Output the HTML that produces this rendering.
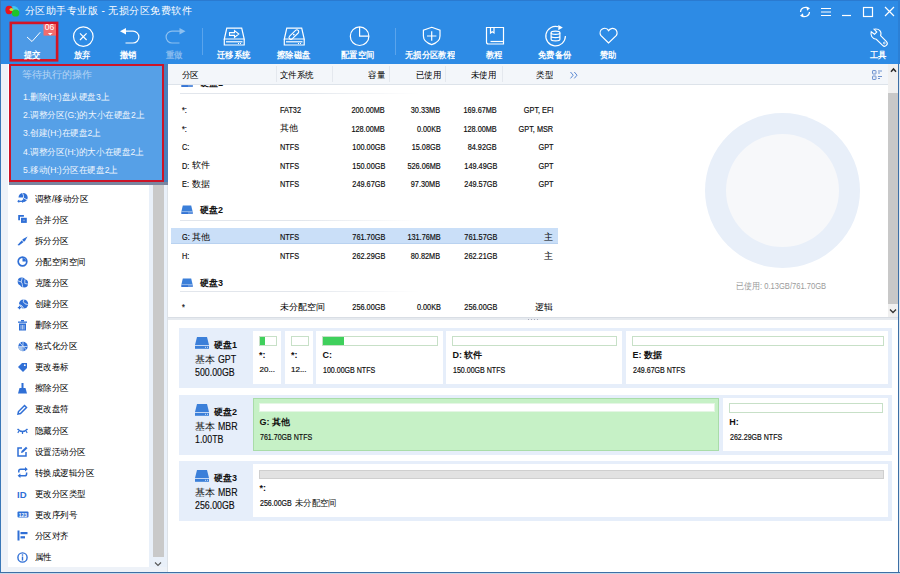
<!DOCTYPE html>
<html><head><meta charset="utf-8">
<style>
*{margin:0;padding:0;box-sizing:border-box}
html,body{width:900px;height:574px;overflow:hidden;background:#fff;font-family:"Liberation Sans",sans-serif}
.a{position:absolute}
.t{position:absolute;white-space:nowrap;line-height:12px;height:12px}
#top{left:0;top:0;width:900px;height:64px;background:#2d8be5;border-top:1px solid #2a7ad0}
#lb{left:0;top:0;width:1px;height:574px;background:#3a78b8}
#rb{left:898px;top:0;width:2px;height:574px;background:linear-gradient(180deg,#2b80d6 0,#2b80d6 64px,#dfe8f2 64px)}
#rb2{left:898px;top:64px;width:1px;height:510px;background:#3d6fa5}
#bb{left:0;top:572px;width:900px;height:2px;background:#c9d8e8;border-top:1px solid #3d6fa5}
.wt{color:#fff}
.tb{color:#fff;font-size:8.7px;font-weight:bold;margin-top:0.8px;transform:scaleX(.925);transform-origin:0 50%}
/* sidebar */
#sbg{left:1px;top:64px;width:167px;height:508px;background:#eef2f8}
#spanel{left:8px;top:64px;width:142px;height:503px;background:#fff}
#sscr{left:149px;top:64px;width:18px;height:503px;background:#e9f0f9}
#sthumb{left:153px;top:72px;width:11px;height:485px;background:#c9c9c9}
#sline{left:167px;top:64px;width:1px;height:508px;background:#dde2e8}
.si{color:#000;font-weight:500;font-size:9px;transform:scaleX(.94);transform-origin:0 50%}
/* popup */
#pop{left:9px;top:64px;width:155px;height:118px;background:#56a0e7;border:2.6px solid #cc1428}
#popsh{left:9px;top:64px;width:159px;height:121px;background:linear-gradient(180deg,#4a80bb 0,#4a80bb 118px,#7a85a0 118px)}
.pt{color:#f0f6fd;font-size:9px;transform:scaleX(.955);transform-origin:0 50%}
/* right upper */
#hdr{z-index:2;left:168px;top:64px;width:720px;height:21px;background:#f3f6fa;border-bottom:1px solid #dde3ea}
.hs{z-index:3;position:absolute;top:66px;width:1px;height:16px;background:#e4e8ee}
.th{z-index:3;color:#000;font-weight:500;font-size:9px;transform:scaleX(.94);transform-origin:0 50%}
.tc{color:#000;font-weight:500;font-size:9px;margin-top:0.5px}
.td{color:#000;-webkit-text-stroke:0.2px #333;font-size:8.5px;margin-top:1px;transform:scaleX(.86);transform-origin:0 50%}
#uscr{left:888px;top:64px;width:10px;height:253px;background:#f0f0f0}
#uthumb{left:888px;top:93px;width:10px;height:211px;background:#c8c8c8}
.sep{position:absolute;left:180px;width:240px;height:1px;background:linear-gradient(90deg,#e2e6ec,#e2e6ec 50%,rgba(226,230,236,0))}
#sel{left:171px;top:228px;width:387px;height:16px;background:#cadff8;border-bottom:1px solid #b9d2f0}
#donut{left:705px;top:113px;width:155px;height:155px;border-radius:50%;background:#e8eff9}
#donin{left:726px;top:134px;width:113px;height:113px;border-radius:50%;background:#f7f8fa}
#split{left:168px;top:317px;width:730px;height:3px;background:#e6eaef;border-top:1px solid #d9dee5}
/* cards */
.card{position:absolute;left:179px;width:713px;height:60px;background:#e6eefa}
.pbox{position:absolute;background:#fff}
.bar{position:absolute;height:10px;border:1px solid #c7e0c7;background:#fff}
.fill{position:absolute;left:0;top:0;height:8px;background:#3fd05c}
.ct{color:#000;-webkit-text-stroke:0.2px #333;font-size:8.5px;transform:scaleX(.83);transform-origin:0 50%}
.ci{color:#000;-webkit-text-stroke:0.15px #333;font-size:10px;transform:scaleX(.88);transform-origin:0 50%}
.r{transform-origin:100% 50%!important}
.cb{color:#111;font-size:9px;font-weight:bold}
</style></head><body>
<div id="top" class="a"></div>
<div id="sbg" class="a"></div>
<div id="spanel" class="a"></div>
<div id="sscr" class="a"></div>
<div id="sthumb" class="a"></div>
<div id="sline" class="a"></div>

<div id="hdr" class="a"></div>
<div id="uscr" class="a"></div>
<div id="uthumb" class="a"></div>
<div id="sel" class="a"></div>
<div id="donut" class="a"></div>
<div id="donin" class="a"></div>
<div id="split" class="a"></div>

<svg class="a" style="left:0;top:0" width="900" height="64" viewBox="0 0 900 64">
 <!-- logo -->
 <g>
  <ellipse cx="9" cy="10" rx="3.6" ry="4.2" fill="#e8141c"/>
  <path d="M12 6.2 A6 5.5 0 0 1 19.2 11 L14 11 Z" fill="#3fc8f0"/>
  <ellipse cx="15.6" cy="13" rx="3.8" ry="3.6" fill="#1ec42a"/>
  <ellipse cx="11.5" cy="9.5" rx="2" ry="1.6" fill="#b8e040"/>
 </g>
 <!-- window controls -->
 <g fill="none" stroke="#fff" stroke-width="1.2">
  <path d="M800.5 12 A4.8 4.8 0 0 1 808.5 8.6"/>
  <path d="M809.5 12 A4.8 4.8 0 0 1 801.5 15.4"/>
  <path d="M821 8.5 H831 M821 12 H831 M821 15.5 H831" stroke-width="1"/>
  <path d="M842 15.5 H851"/>
  <rect x="863.5" y="7.5" width="9" height="9"/>
  <path d="M885 7 L894 16 M894 7 L885 16"/>
 </g>
 <path d="M806.5 6.5 L810 8.2 L807 10.8 Z M803.5 17.5 L800 15.8 L803 13.2 Z" fill="#fff"/>
 <!-- 提交 box -->
 <rect x="10.8" y="22.9" width="46.3" height="37.4" fill="#4d9ae6" stroke="#d41424" stroke-width="2.6"/>
 <rect x="43.5" y="24" width="12.5" height="11.6" fill="#f26c6c"/>
 <text x="49.6" y="30.4" font-size="8.6" fill="#fff" text-anchor="middle" font-family="Liberation Sans" textLength="9.5" lengthAdjust="spacingAndGlyphs">06</text>
 <path d="M47.8 33 H52.6 L50.2 35.2 Z" fill="#fff"/>
 <g fill="none" stroke="#fff" stroke-width="1.2">
  <path d="M27 37 L32 41.5 L40.3 32.2" stroke-width="1"/>
  <!-- 放弃 -->
  <circle cx="83.3" cy="36.6" r="9.8"/>
  <path d="M80 33.4 L86.6 40 M86.6 33.4 L80 40"/>
  <!-- 撤销 -->
  <path d="M124 31.2 H133 A5.9 5.9 0 0 1 133 43 H125.5"/>
  <!-- 配置空间 -->
  <circle cx="359.6" cy="36.2" r="9.3"/>
  <path d="M359.6 26.9 V36.2 H368.9"/>
  <!-- shield -->
  <path d="M431.7 27.3 L440 30.2 V36 C440 40.5 436 43.2 431.7 44.6 C427.4 43.2 423.4 40.5 423.4 36 V30.2 Z"/>
  <path d="M431.7 31.3 V40.7 M427 36 H436.4"/>
  <!-- book -->
  <path d="M486.5 27.5 H503.5 V44 H488.5 A2 2 0 0 1 486.5 42 Z"/>
  <path d="M490.5 41.5 H503.5"/>
  <path d="M490.5 27.5 V33 L492.2 31.8 L494 33 V27.5"/>
  <!-- backup -->
  <path d="M565.4 36.1 A9.8 9.8 0 1 1 558.6 26.8"/>
  <ellipse cx="555.5" cy="32.8" rx="4.4" ry="1.6"/>
  <path d="M551.1 32.8 V39.3 A4.4 1.6 0 0 0 559.9 39.3 V32.8 M551.1 36.1 A4.4 1.6 0 0 0 559.9 36.1"/>
  <!-- heart -->
  <path d="M608.6 43 L600.8 35.4 A4.3 4.3 0 0 1 608.6 30.6 A4.3 4.3 0 0 1 616.4 35.4 Z"/>
  <!-- wrench -->
  <path d="M874 29.2 L876.8 32 L874.5 34.3 L871.2 31.8 C870.3 35 871.8 38.7 876.3 39.3 L882.6 45.3 A2 2 0 0 0 886.5 41.7 L880.6 35.6 C882 31.5 879.5 28.3 874 29.2 Z" stroke-width="1.1"/><circle cx="884.3" cy="43" r="0.9" stroke-width="0.8"/>
 </g>
 <path d="M120 31.2 L126 28 V34.4 Z" fill="#fff"/>
 <g fill="none" stroke="#8cc0f0" stroke-width="1.2">
  <path d="M181 31.2 H172 A5.9 5.9 0 0 0 172 43 H179.5"/>
 </g>
 <path d="M185.5 31.2 L179.5 28 V34.4 Z" fill="#8cc0f0"/>
 <path d="M558.3 25 L562.8 27.6 L558.3 30.3 Z" fill="#fff"/>
 <!-- separators -->
 <rect x="202" y="28" width="1" height="27" fill="#5aa4ec"/>
 <rect x="395" y="28" width="1" height="27" fill="#5aa4ec"/>
 <!-- drives -->
 <g fill="none" stroke="#fff" stroke-width="1.2">
  <path d="M226.8 28.2 H241.7 L244.2 39 H224.3 Z"/>
  <path d="M224.3 39 V45 H244.2 V39"/>
  <path d="M226 41.8 H242.5"/>
  <path d="M229.5 32.6 H234.5 V30.6 L238.8 34 L234.5 37.4 V35.4 H229.5 Z" stroke-width="1.1"/>
  <path d="M286.8 28.2 H301.7 L304.2 39 H284.3 Z"/>
  <path d="M284.3 39 V45 H304.2 V39"/>
  <path d="M286 41.8 H302.5"/>
  <path d="M289.6 36.2 L295.6 30.4 A1.8 1.8 0 0 1 298.2 33 L292.2 38.8 A1.8 1.8 0 0 1 289.6 36.2 Z" stroke-width="1.1"/><circle cx="293.8" cy="34.6" r="0.9" fill="#fff" stroke="none"/>
 </g>
 
 <path d="M238 43.5 h1 M240 43.5 h1 M298 43.5 h1 M300 43.5 h1" stroke="#fff" stroke-width="1"/>
</svg>
<!-- title -->
<div class="t wt" style="left:25px;top:4.5px;font-size:10px;letter-spacing:0.45px;line-height:12px">分区助手专业版 - 无损分区免费软件</div>
<!-- toolbar labels -->
<div class="t tb" style="left:24px;top:48.3px">提交</div>
<div class="t tb" style="left:74px;top:48.3px">放弃</div>
<div class="t tb" style="left:120px;top:48.3px">撤销</div>
<div class="t tb" style="left:166px;top:48.3px;color:#86baee">重做</div>
<div class="t tb" style="left:217px;top:48.3px">迁移系统</div>
<div class="t tb" style="left:277px;top:48.3px">擦除磁盘</div>
<div class="t tb" style="left:341px;top:48.3px">配置空间</div>
<div class="t tb" style="left:405px;top:48.3px">无损分区教程</div>
<div class="t tb" style="left:486px;top:48.3px">教程</div>
<div class="t tb" style="left:538px;top:48.3px">免费备份</div>
<div class="t tb" style="left:600px;top:48.3px">赞助</div>
<div class="t tb" style="left:870px;top:48.3px">工具</div>
<!-- sidebar -->
<div class="t si" style="left:35px;top:192.6px">调整/移动分区</div>
<div class="t si" style="left:35px;top:213.7px">合并分区</div>
<div class="t si" style="left:35px;top:234.8px">拆分分区</div>
<div class="t si" style="left:35px;top:255.8px">分配空闲空间</div>
<div class="t si" style="left:35px;top:276.9px">克隆分区</div>
<div class="t si" style="left:35px;top:298.0px">创建分区</div>
<div class="t si" style="left:35px;top:319.1px">删除分区</div>
<div class="t si" style="left:35px;top:340.2px">格式化分区</div>
<div class="t si" style="left:35px;top:361.2px">更改卷标</div>
<div class="t si" style="left:35px;top:382.3px">擦除分区</div>
<div class="t si" style="left:35px;top:403.4px">更改盘符</div>
<div class="t si" style="left:35px;top:424.5px">隐藏分区</div>
<div class="t si" style="left:35px;top:445.6px">设置活动分区</div>
<div class="t si" style="left:35px;top:466.6px">转换成逻辑分区</div>
<div class="t si" style="left:35px;top:487.7px">更改分区类型</div>
<div class="t si" style="left:35px;top:508.8px">更改序列号</div>
<div class="t si" style="left:35px;top:529.9px">分区对齐</div>
<div class="t si" style="left:35px;top:551.0px">属性</div>
<svg class="a" style="left:17px;top:193.1px" width="12" height="11" viewBox="0 0 12 11"><path d="M1.5 4.6 A4.6 4.6 0 1 1 6.1 9.2 V4.6 Z" fill="#2f6fd6"/><path d="M5.6 0.2 Q7 3 6.4 5 L10.4 7" stroke="#fff" stroke-width="0.8" fill="none"/><path d="M1.6 8.3 H5.6" stroke="#2f6fd6" stroke-width="1.3"/><path d="M0.2 8.3 L2.2 6.6 V10 Z M7 8.3 L5 6.6 V10 Z" fill="#2f6fd6"/></svg>
<svg class="a" style="left:17px;top:214.2px" width="12" height="11" viewBox="0 0 12 11"><path d="M1.2 6.3 V1 H6.9 V2.8 H3 V6.3 Z" fill="#2f6fd6"/><rect x="4.9" y="4.7" width="4" height="3.3" fill="#6f98e0" stroke="#2f6fd6" stroke-width="1.8"/></svg>
<svg class="a" style="left:17px;top:235.3px" width="12" height="11" viewBox="0 0 12 11"><path d="M0.5 10 L6 4 L10.5 1.5 L8 6 L2 10.5 Z" fill="#2f6fd6"/><path d="M3 3 L8 8.5" stroke="#fff" stroke-width="0.9"/></svg>
<svg class="a" style="left:17px;top:256.3px" width="12" height="11" viewBox="0 0 12 11"><circle cx="5.5" cy="5.5" r="4.3" fill="none" stroke="#2f6fd6" stroke-width="1.7"/><path d="M5.5 5.5 V2 A3.5 3.5 0 0 1 9 5.5 Z" fill="#2f6fd6"/></svg>
<svg class="a" style="left:17px;top:277.4px" width="12" height="11" viewBox="0 0 12 11"><circle cx="4.6" cy="4.4" r="3.9" fill="#2f6fd6"/><circle cx="7" cy="6.4" r="4.1" fill="#2f6fd6"/><path d="M1 3.8 L4.2 5 L5.2 1 M4.2 5 C5.6 6 5.2 9 6 11 M7.8 2.5 V6.5 L11 7" stroke="#fff" stroke-width="0.7" fill="none"/></svg>
<svg class="a" style="left:17px;top:298.5px" width="12" height="11" viewBox="0 0 12 11"><circle cx="6.6" cy="5" r="4.6" fill="#2f6fd6"/><path d="M7 0.3 Q5 3 8 4.8 L10.8 5.5 M2 5.6 Q5 5.6 6.8 9.6" stroke="#fff" stroke-width="0.8" fill="none"/><path d="M0.3 8.6 H4.7 M2.5 6.4 V10.8" stroke="#fff" stroke-width="2.2"/><path d="M0.8 8.6 H4.2 M2.5 6.9 V10.3" stroke="#2f6fd6" stroke-width="1.2"/></svg>
<svg class="a" style="left:17px;top:319.6px" width="12" height="11" viewBox="0 0 12 11"><rect x="1" y="1.5" width="9" height="1.3" fill="#2f6fd6"/><rect x="4" y="0" width="3" height="1.5" fill="#2f6fd6"/><rect x="2" y="3.5" width="7" height="7" fill="#2f6fd6"/><path d="M4 5 V9.5 M5.5 5 V9.5 M7 5 V9.5" stroke="#fff" stroke-width="0.6"/></svg>
<svg class="a" style="left:17px;top:340.7px" width="12" height="11" viewBox="0 0 12 11"><circle cx="6" cy="5.5" r="4.7" fill="#2f6fd6"/><path d="M1.3 5.5 L10.7 5.5 M6 0.8 V10.2 M3 2 L9.5 9" stroke="#d9e6f8" stroke-width="0.8" fill="none"/><path d="M1.5 6 A4.7 4.7 0 0 0 5.5 10.2 V6 Z" fill="#a9c4ea"/></svg>
<svg class="a" style="left:17px;top:361.7px" width="12" height="11" viewBox="0 0 12 11"><path d="M1 5 L5 1 H10 V6 L6 10 Z" fill="#2f6fd6"/><circle cx="7.8" cy="3.2" r="0.9" fill="#fff"/></svg>
<svg class="a" style="left:17px;top:382.8px" width="12" height="11" viewBox="0 0 12 11"><rect x="4.5" y="0" width="2" height="5" fill="#2f6fd6"/><path d="M2.5 5 H8.5 L10 10.5 H1 Z" fill="#2f6fd6"/></svg>
<svg class="a" style="left:17px;top:403.9px" width="12" height="11" viewBox="0 0 12 11"><path d="M1 10 L1.5 7.5 L7.5 1.5 L9.5 3.5 L3.5 9.5 Z" fill="none" stroke="#2f6fd6" stroke-width="1.5"/></svg>
<svg class="a" style="left:17px;top:425.0px" width="12" height="11" viewBox="0 0 12 11"><path d="M0.5 4 Q5.5 9 10.5 4" fill="none" stroke="#2f6fd6" stroke-width="1.5"/><path d="M2 6 L0.8 7.8 M5.5 7 V9 M9 6 L10.2 7.8" stroke="#2f6fd6" stroke-width="1.2"/></svg>
<svg class="a" style="left:17px;top:446.1px" width="12" height="11" viewBox="0 0 12 11"><path d="M9 6 V10 H1 V2 H5" fill="none" stroke="#2f6fd6" stroke-width="1.5"/><path d="M4 7 L4.5 5 L9 0.8 L10.5 2.3 L6 6.5 Z" fill="#2f6fd6"/></svg>
<svg class="a" style="left:17px;top:467.1px" width="12" height="11" viewBox="0 0 12 11"><path d="M1.8 5.6 V4 Q1.8 2.2 3.6 2.2 H8.6 M9.6 5.4 V7 Q9.6 8.8 7.8 8.8 H2.8" fill="none" stroke="#2f6fd6" stroke-width="1.5"/><path d="M8 0 L10.8 2.2 L8 4.4 Z M3.4 6.6 L0.6 8.8 L3.4 11 Z" fill="#2f6fd6"/></svg>
<svg class="a" style="left:17px;top:488.2px" width="12" height="11" viewBox="0 0 12 11"><text x="0" y="9.5" font-size="9.5" font-weight="bold" fill="#2f6fd6" font-family="Liberation Sans">ID</text></svg>
<svg class="a" style="left:17px;top:509.3px" width="12" height="11" viewBox="0 0 12 11"><rect x="0.5" y="2.5" width="11" height="6" rx="1" fill="#2f6fd6"/><text x="1.7" y="7.6" font-size="5" font-weight="bold" fill="#fff" font-family="Liberation Sans">123</text></svg>
<svg class="a" style="left:17px;top:530.4px" width="12" height="11" viewBox="0 0 12 11"><rect x="0.5" y="0.5" width="2" height="10" fill="#2f6fd6"/><rect x="3.5" y="2" width="7" height="2.2" fill="#2f6fd6"/><rect x="3.5" y="6.2" width="4.5" height="2.2" fill="#2f6fd6"/></svg>
<svg class="a" style="left:17px;top:551.5px" width="12" height="11" viewBox="0 0 12 11"><circle cx="5.5" cy="5.5" r="4.6" fill="none" stroke="#2f6fd6" stroke-width="1.4"/><rect x="4.8" y="4.5" width="1.4" height="4" fill="#2f6fd6"/><rect x="4.8" y="2.3" width="1.4" height="1.4" fill="#2f6fd6"/></svg>
<!-- header -->
<div class="t th" style="left:182px;top:69px">分区</div>
<div class="t th" style="left:280px;top:69px">文件系统</div>
<div class="t th r" style="right:515px;top:69px">容量</div>
<div class="t th r" style="right:459.5px;top:69px">已使用</div>
<div class="t th r" style="right:404px;top:69px">未使用</div>
<div class="t th r" style="right:347.5px;top:69px">类型</div>
<div class="hs" style="left:276px"></div>
<div class="hs" style="left:332px"></div>
<div class="hs" style="left:389px"></div>
<div class="hs" style="left:445px"></div>
<div class="hs" style="left:502px"></div>

<div class="t td" style="left:182px;top:103px">*:</div>
<div class="t td" style="left:280px;top:103px">FAT32</div>
<div class="t td r" style="right:515px;top:103px">200.00MB</div>
<div class="t td r" style="right:459.5px;top:103px">30.33MB</div>
<div class="t td r" style="right:403px;top:103px">169.67MB</div>
<div class="t td r" style="right:347px;top:103px">GPT, EFI</div>
<div class="t td" style="left:182px;top:121.5px">*:</div>
<div class="t tc" style="left:280px;top:121.5px">其他</div>
<div class="t td r" style="right:515px;top:121.5px">128.00MB</div>
<div class="t td r" style="right:459.5px;top:121.5px">0.00KB</div>
<div class="t td r" style="right:403px;top:121.5px">128.00MB</div>
<div class="t td r" style="right:347px;top:121.5px">GPT, MSR</div>
<div class="t td" style="left:182px;top:140px">C:</div>
<div class="t td" style="left:280px;top:140px">NTFS</div>
<div class="t td r" style="right:515px;top:140px">100.00GB</div>
<div class="t td r" style="right:459.5px;top:140px">15.08GB</div>
<div class="t td r" style="right:403px;top:140px">84.92GB</div>
<div class="t td r" style="right:347px;top:140px">GPT</div>
<div class="t td" style="left:182px;top:158.5px">D:</div>
<div class="t tc" style="left:191.5px;top:158.5px">软件</div>
<div class="t td" style="left:280px;top:158.5px">NTFS</div>
<div class="t td r" style="right:515px;top:158.5px">150.00GB</div>
<div class="t td r" style="right:459.5px;top:158.5px">526.06MB</div>
<div class="t td r" style="right:403px;top:158.5px">149.49GB</div>
<div class="t td r" style="right:347px;top:158.5px">GPT</div>
<div class="t td" style="left:182px;top:177px">E:</div>
<div class="t tc" style="left:191.5px;top:177px">数据</div>
<div class="t td" style="left:280px;top:177px">NTFS</div>
<div class="t td r" style="right:515px;top:177px">249.67GB</div>
<div class="t td r" style="right:459.5px;top:177px">97.30MB</div>
<div class="t td r" style="right:403px;top:177px">249.57GB</div>
<div class="t td r" style="right:347px;top:177px">GPT</div>
<div class="t td" style="left:182px;top:230px">G:</div>
<div class="t tc" style="left:191.5px;top:230px">其他</div>
<div class="t td" style="left:280px;top:230px">NTFS</div>
<div class="t td r" style="right:515px;top:230px">761.70GB</div>
<div class="t td r" style="right:459.5px;top:230px">131.76MB</div>
<div class="t td r" style="right:403px;top:230px">761.57GB</div>
<div class="t tc r" style="right:347px;top:230px">主</div>
<div class="t td" style="left:182px;top:249px">H:</div>
<div class="t td" style="left:280px;top:249px">NTFS</div>
<div class="t td r" style="right:515px;top:249px">262.29GB</div>
<div class="t td r" style="right:459.5px;top:249px">80.82MB</div>
<div class="t td r" style="right:403px;top:249px">262.21GB</div>
<div class="t tc r" style="right:347px;top:249px">主</div>
<div class="t td" style="left:182px;top:300px">*</div>
<div class="t tc" style="left:280px;top:300px">未分配空间</div>
<div class="t td r" style="right:515px;top:300px">256.00GB</div>
<div class="t td r" style="right:459.5px;top:300px">0.00KB</div>
<div class="t td r" style="right:403px;top:300px">256.00GB</div>
<div class="t tc r" style="right:347px;top:300px">逻辑</div>
<div class="sep" style="top:93px"></div>
<div class="sep" style="top:220px"></div>
<div class="sep" style="top:291px"></div>
<div class="t cb" style="left:200px;top:204px">硬盘2</div>
<div class="t cb" style="left:200px;top:277px">硬盘3</div>
<div class="t" style="left:736px;top:279.5px;font-size:8.5px;color:#9a9a9a;transform:scaleX(.89);transform-origin:0 50%">已使用: 0.13GB/761.70GB</div>


<div class="card" style="top:328px"></div>
<div class="card" style="top:395px"></div>
<div class="card" style="top:461px"></div>

<svg class="a" style="left:195px;top:336.5px" width="14" height="12" viewBox="0 0 14 12"><path d="M2 0 H12 L14 8 H0 Z" fill="#3b7fd9"/><rect x="0" y="8.8" width="14" height="3" fill="#3b7fd9"/><rect x="10" y="9.8" width="1" height="1" fill="#cfe0f7"/><rect x="12" y="9.8" width="1" height="1" fill="#cfe0f7"/></svg>
<div class="t cb" style="left:214px;top:339px">硬盘1</div>
<div class="t" style="left:195px;top:353.5px;font-size:10px;color:#111">基本</div><div class="t ci" style="left:218px;top:354.0px">GPT</div>
<div class="t ci" style="left:195px;top:367px">500.00GB</div>
<svg class="a" style="left:195px;top:403.5px" width="14" height="12" viewBox="0 0 14 12"><path d="M2 0 H12 L14 8 H0 Z" fill="#3b7fd9"/><rect x="0" y="8.8" width="14" height="3" fill="#3b7fd9"/><rect x="10" y="9.8" width="1" height="1" fill="#cfe0f7"/><rect x="12" y="9.8" width="1" height="1" fill="#cfe0f7"/></svg>
<div class="t cb" style="left:214px;top:406px">硬盘2</div>
<div class="t" style="left:195px;top:420.5px;font-size:10px;color:#111">基本</div><div class="t ci" style="left:218px;top:421.0px">MBR</div>
<div class="t ci" style="left:195px;top:434px">1.00TB</div>
<svg class="a" style="left:195px;top:469.5px" width="14" height="12" viewBox="0 0 14 12"><path d="M2 0 H12 L14 8 H0 Z" fill="#3b7fd9"/><rect x="0" y="8.8" width="14" height="3" fill="#3b7fd9"/><rect x="10" y="9.8" width="1" height="1" fill="#cfe0f7"/><rect x="12" y="9.8" width="1" height="1" fill="#cfe0f7"/></svg>
<div class="t cb" style="left:214px;top:472px">硬盘3</div>
<div class="t" style="left:195px;top:486.5px;font-size:10px;color:#111">基本</div><div class="t ci" style="left:218px;top:487.0px">MBR</div>
<div class="t ci" style="left:195px;top:500px">256.00GB</div>
<div class="pbox" style="left:252.5px;top:331px;width:28.5px;height:53px"></div>
<div class="bar" style="left:258.5px;top:336px;width:18.0px"><div class="fill" style="width:5.2px"></div></div>
<div class="t cb" style="left:259.0px;top:348.5px">*:</div>
<div class="t ct" style="left:259.5px;top:363.5px;transform:none;font-size:8px">20...</div>
<div class="pbox" style="left:284.5px;top:331px;width:28.5px;height:53px"></div>
<div class="bar" style="left:290.5px;top:336px;width:18.0px"></div>
<div class="t cb" style="left:291.0px;top:348.5px">*:</div>
<div class="t ct" style="left:291px;top:363.5px;transform:none;font-size:8px">12...</div>
<div class="pbox" style="left:316px;top:331px;width:126.5px;height:53px"></div>
<div class="bar" style="left:322.0px;top:336px;width:116.0px"><div class="fill" style="width:20.8px"></div></div>
<div class="t cb" style="left:322.5px;top:348.5px">C:</div>
<div class="t ct" style="left:323px;top:363.5px">100.00GB NTFS</div>
<div class="pbox" style="left:446px;top:331px;width:175.70000000000005px;height:53px"></div>
<div class="bar" style="left:452.0px;top:336px;width:165.2px"></div>
<div class="t cb" style="left:452.5px;top:348.5px">D: 软件</div>
<div class="t ct" style="left:453px;top:363.5px">150.00GB NTFS</div>
<div class="pbox" style="left:626px;top:331px;width:262.29999999999995px;height:53px"></div>
<div class="bar" style="left:632.0px;top:336px;width:251.8px"></div>
<div class="t cb" style="left:632.5px;top:348.5px">E: 数据</div>
<div class="t ct" style="left:633px;top:363.5px">249.67GB NTFS</div>
<div class="pbox" style="left:253px;top:398px;width:466px;height:53px;background:#c6f1c6;border:1px solid #a9dca9"></div>
<div class="bar" style="left:259.0px;top:403px;width:455.5px;height:9px;border-color:#e4f6e4"></div>
<div class="t cb" style="left:259.5px;top:415.5px">G: 其他</div>
<div class="t ct" style="left:260px;top:430.5px">761.70GB NTFS</div>
<div class="pbox" style="left:722.7px;top:398px;width:165.29999999999995px;height:53px"></div>
<div class="bar" style="left:728.7px;top:403px;width:154.8px"></div>
<div class="t cb" style="left:729.2px;top:415.5px">H:</div>
<div class="t ct" style="left:729.7px;top:430.5px">262.29GB NTFS</div>
<div class="pbox" style="left:253px;top:464px;width:635px;height:53px"></div>
<div class="bar" style="left:259.0px;top:469.5px;width:624.5px;height:9.5px;background:#e2e2e2;border-color:#cfcfcf"></div>
<div class="t cb" style="left:259.5px;top:481.5px">*:</div>
<div class="t ct" style="left:260px;top:496.5px">256.00GB</div><div class="t" style="left:295px;top:496.5px;font-size:9px;color:#111;transform:scaleX(.93);transform-origin:0 50%">未分配空间</div>
<div id="popsh" class="a"></div><div id="pop" class="a"></div>



<svg class="a" style="left:181px;top:204.5px" width="12" height="10" viewBox="0 0 12 10"><path d="M1.8 0.5 H10.2 L11.6 6.6 H0.4 Z" fill="#3b7fd9"/><rect x="0.3" y="6.6" width="11.4" height="2.4" fill="#3574d4"/><rect x="0.3" y="6.6" width="11.4" height="0.5" fill="#a8c8f0"/><rect x="7.5" y="7.5" width="1" height="1" fill="#d0e2f8"/><rect x="9.5" y="7.5" width="1" height="1" fill="#d0e2f8"/></svg>
<svg class="a" style="left:181px;top:277.5px" width="12" height="10" viewBox="0 0 12 10"><path d="M1.8 0.5 H10.2 L11.6 6.6 H0.4 Z" fill="#3b7fd9"/><rect x="0.3" y="6.6" width="11.4" height="2.4" fill="#3574d4"/><rect x="0.3" y="6.6" width="11.4" height="0.5" fill="#a8c8f0"/><rect x="7.5" y="7.5" width="1" height="1" fill="#d0e2f8"/><rect x="9.5" y="7.5" width="1" height="1" fill="#d0e2f8"/></svg>
<svg class="a" style="left:181px;top:77.5px" width="12" height="10" viewBox="0 0 12 10"><path d="M1.8 0.5 H10.2 L11.6 6.6 H0.4 Z" fill="#3b7fd9"/><rect x="0.3" y="6.6" width="11.4" height="2.4" fill="#3574d4"/><rect x="0.3" y="6.6" width="11.4" height="0.5" fill="#a8c8f0"/><rect x="7.5" y="7.5" width="1" height="1" fill="#d0e2f8"/><rect x="9.5" y="7.5" width="1" height="1" fill="#d0e2f8"/></svg>
<div class="t cb" style="left:200px;top:76.5px">硬盘1</div>
<svg class="a" style="z-index:3;left:568px;top:69px" width="12" height="12" viewBox="0 0 12 12"><path d="M2.5 3 L5.2 6.2 L2.5 9.4 M6.3 3 L9 6.2 L6.3 9.4" fill="none" stroke="#5a88d2" stroke-width="1"/></svg>
<svg class="a" style="z-index:3;left:871px;top:68px" width="12" height="12" viewBox="0 0 12 12"><rect x="1.5" y="2.5" width="3.5" height="3.5" rx="0.6" fill="#e3ebf7" stroke="#6f93cf" stroke-width="1"/><rect x="1.5" y="8" width="3.5" height="3.5" rx="0.6" fill="#e3ebf7" stroke="#6f93cf" stroke-width="1"/><path d="M7 3 H11 M7 5 H9 M7 8.5 H11 M7 10.5 H9" stroke="#6f93cf" stroke-width="1"/></svg>
<svg class="a" style="left:888px;top:66px" width="10" height="10" viewBox="0 0 10 10"><path d="M3 5.8 L5.5 3 L8 5.8" fill="none" stroke="#2a2a2a" stroke-width="1.5"/></svg>
<svg class="a" style="left:888px;top:306px" width="10" height="10" viewBox="0 0 10 10"><path d="M2 3.5 L5 6.5 L8 3.5" fill="none" stroke="#333" stroke-width="1.3"/></svg>
<svg class="a" style="left:153px;top:560px" width="10" height="8" viewBox="0 0 10 8"><path d="M2 2.5 L5 5.5 L8 2.5" fill="none" stroke="#555" stroke-width="1.1"/></svg>
<div class="a" style="left:528px;top:319px;width:10px;height:1px;background:repeating-linear-gradient(90deg,#aab 0 1px,transparent 1px 3px)"></div>
<!-- popup text -->
<div class="t" style="left:22px;top:69.3px;font-size:10px;color:#b3d4f5">等待执行的操作</div>
<div class="t pt" style="left:23px;top:90.75px">1.删除(H:)盘从硬盘3上</div>
<div class="t pt" style="left:23px;top:108.5px">2.调整分区(G:)的大小在硬盘2上</div>
<div class="t pt" style="left:23px;top:127px">3.创建(H:)在硬盘2上</div>
<div class="t pt" style="left:23px;top:145.7px">4.调整分区(H:)的大小在硬盘2上</div>
<div class="t pt" style="left:23px;top:163.7px">5.移动(H:)分区在硬盘2上</div>
<div id="lb" class="a"></div>
<div id="rb" class="a"></div><div id="rb2" class="a"></div>
<div id="bb" class="a"></div>
</body></html>
